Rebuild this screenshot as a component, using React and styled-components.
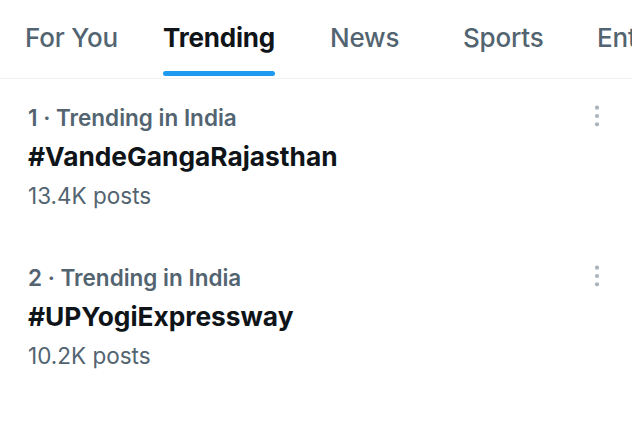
import React from "react";
import styled, { createGlobalStyle } from "styled-components";

const GlobalStyle = createGlobalStyle`
  html, body {
    margin: 0;
    padding: 0;
    background: #fff;
  }
  body {
    font-family: Inter, "Noto Sans", "Liberation Sans", sans-serif;
    -webkit-font-smoothing: antialiased;
  }
`;

const Page = styled.div`
  width: 632px;
  height: 421px;
  overflow: hidden;
  background: #fff;
`;

// top tab strip
const TabBar = styled.nav`
  display: flex;
  align-items: stretch;
  height: 78px;
  border-bottom: 1px solid #eff3f4;
  padding-left: 25px;
  white-space: nowrap;
`;

const Tab = styled.div`
  display: flex;
  align-items: stretch;
  flex: 0 0 auto;
  width: ${(p) => (p.$width ? `${p.$width}px` : "auto")};
`;

const TabLabel = styled.span`
  position: relative;
  display: flex;
  align-items: center;
  padding-bottom: 4px;
  font-size: 26px;
  font-weight: ${(p) => (p.$active ? 700 : 500)};
  color: ${(p) => (p.$active ? "#0f1419" : "#536471")};
  letter-spacing: -0.2px;

  &::after {
    content: "";
    display: ${(p) => (p.$active ? "block" : "none")};
    position: absolute;
    left: 0;
    right: 0;
    bottom: 2px;
    height: 5px;
    border-radius: 3px;
    background: #1d9bf0;
  }
`;

const List = styled.div`
  display: flex;
  flex-direction: column;
`;

const Trend = styled.div`
  display: flex;
  justify-content: space-between;
  padding: 25px 23px 0 28px;
  height: 160px;
  box-sizing: border-box;
`;

const Info = styled.div`
  display: flex;
  flex-direction: column;
`;

const Meta = styled.div`
  font-size: 22.5px;
  font-weight: 600;
  color: #536471;
  line-height: 28px;
`;

const Title = styled.div`
  font-size: 26.3px;
  font-weight: 700;
  color: #0f1419;
  line-height: 34px;
  margin-top: 8px;
`;

const Count = styled.div`
  font-size: 22.5px;
  font-weight: 400;
  color: #536471;
  line-height: 30px;
  margin-top: 7px;
`;

const More = styled.svg`
  width: 24px;
  height: 24px;
  margin-top: 0;
  fill: #aab4bc;
  flex: 0 0 auto;
`;

const tabs = [
  { label: "For You", width: 138 },
  { label: "Trending", width: 167, active: true },
  { label: "News", width: 133 },
  { label: "Sports", width: 134 },
  { label: "Entertainment" },
];

const trends = [
  { rank: 1, place: "India", tag: "#VandeGangaRajasthan", posts: "13.4K posts" },
  { rank: 2, place: "India", tag: "#UPYogiExpressway", posts: "10.2K posts" },
];

const DotsIcon = () => (
  <More viewBox="0 0 24 24">
    <circle cx="12" cy="3.7" r="2.1" />
    <circle cx="12" cy="12" r="2.1" />
    <circle cx="12" cy="20.3" r="2.1" />
  </More>
);

const App = () => {
  return (
    <Page>
      <GlobalStyle />
      <TabBar>
        {tabs.map((t) => (
          <Tab key={t.label} $width={t.width}>
            <TabLabel $active={t.active}>{t.label}</TabLabel>
          </Tab>
        ))}
      </TabBar>
      <List>
        {trends.map((t) => (
          <Trend key={t.rank}>
            <Info>
              <Meta>
                {t.rank} · Trending in {t.place}
              </Meta>
              <Title>{t.tag}</Title>
              <Count>{t.posts}</Count>
            </Info>
            <DotsIcon />
          </Trend>
        ))}
      </List>
    </Page>
  );
};

export default App;
